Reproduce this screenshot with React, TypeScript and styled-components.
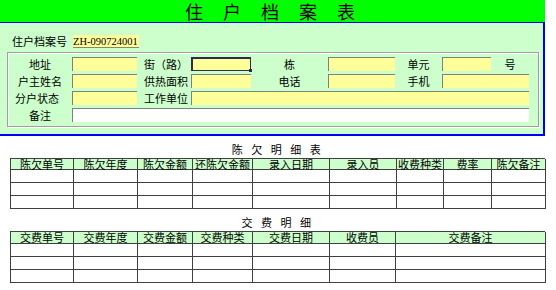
import styled, { createGlobalStyle, css } from "styled-components";

const GlobalStyle = createGlobalStyle`
  body {
    margin: 0;
    background: #fff;
    font-family: "Noto Sans CJK SC", "Noto Sans", sans-serif;
    font-size: 11px;
    color: #000;
  }
`;

interface IColumn {
  title: string;
  width: number;
}

const arrearsColumns: IColumn[] = [
  { title: "陈欠单号", width: 63 },
  { title: "陈欠年度", width: 64 },
  { title: "陈欠金额", width: 55 },
  { title: "还陈欠金额", width: 60 },
  { title: "录入日期", width: 77 },
  { title: "录入员", width: 67 },
  { title: "收费种类", width: 47 },
  { title: "费率", width: 48 },
  { title: "陈欠备注", width: 54 },
];

const paymentColumns: IColumn[] = [
  { title: "交费单号", width: 63 },
  { title: "交费年度", width: 64 },
  { title: "交费金额", width: 55 },
  { title: "交费种类", width: 60 },
  { title: "交费日期", width: 77 },
  { title: "收费员", width: 66 },
  { title: "交费备注", width: 150 },
];

interface IDetailTableProps {
  caption: string;
  columns: IColumn[];
  headHeight: number;
  rows?: number;
}

const DetailTable = ({ caption, columns, headHeight, rows = 3 }: IDetailTableProps) => {
  return (
    <Section>
      <Caption>{caption}</Caption>
      <Grid $cols={columns.map((c) => c.width)}>
        {columns.map((c) => (
          <HeadCell key={c.title} $height={headHeight}>
            {c.title}
          </HeadCell>
        ))}
        {Array.from({ length: rows }).map((_, r) =>
          columns.map((c) => <Cell key={`${r}-${c.title}`} />)
        )}
      </Grid>
    </Section>
  );
};

const App = () => {
  return (
    <>
      <GlobalStyle />
      <Page>
        <TitleBar>住户档案表</TitleBar>
        <Panel>
          <RecordRow>
            <RecordLabel>住户档案号</RecordLabel>
            <RecordValue>ZH-090724001</RecordValue>
          </RecordRow>
          <GroupBox>
            <Label>地址</Label>
            <Field />
            <Label $align="left">街（路）</Label>
            <Field $focused />
            <Label>栋</Label>
            <Field />
            <Label>单元</Label>
            <Field />
            <Label>号</Label>

            <Label>户主姓名</Label>
            <Field />
            <Label $align="left">供热面积</Label>
            <Field />
            <Label>电话</Label>
            <Field />
            <Label>手机</Label>
            <Field $span={2} />

            <Label $align="left">分户状态</Label>
            <Field />
            <Label $align="left">工作单位</Label>
            <Field $span={6} />

            <Label>备注</Label>
            <Field $span={8} $white />
          </GroupBox>
        </Panel>
        <DetailTable caption="陈欠明细表" columns={arrearsColumns} headHeight={11} />
        <DetailTable caption="交费明细" columns={paymentColumns} headHeight={12} />
      </Page>
    </>
  );
};

export default App;

const Page = styled.div`
  width: 545px;
`;

const TitleBar = styled.div`
  height: 22px;
  background: #00ff00;
  display: flex;
  align-items: center;
  justify-content: center;
  padding-left: 15px;
  box-sizing: border-box;
  font-size: 18px;
  line-height: 22px;
  letter-spacing: 20px;
`;

const Panel = styled.div`
  background: #ccffcc;
  border-top: 1px solid #0000ff;
  border-right: 2px solid #0000ff;
  border-bottom: 2px solid #0000ff;
  padding: 10px 0 7px 7px;
  display: flex;
  flex-direction: column;
  gap: 4px;
`;

const RecordRow = styled.div`
  height: 15px;
  display: flex;
  align-items: center;
  padding-left: 5px;
`;

const RecordLabel = styled.span`
  width: 61px;
  line-height: 14px;
`;

const RecordValue = styled.span`
  height: 12px;
  margin-top: 2px;
  padding-right: 1px;
  background: #ffff99;
  border-bottom: 1px solid #8a8a60;
  font-family: "Liberation Serif", serif;
  font-size: 10.5px;
  line-height: 13px;
  white-space: nowrap;
`;

const GroupBox = styled.div`
  width: 532px;
  box-sizing: border-box;
  border: 1px solid #a0a0a0;
  box-shadow: inset 1px 1px 0 #fff, 1px 1px 0 #fff;
  padding: 4px 9px 4px 0;
  display: grid;
  grid-template-columns: 64px 65px 54px 60px 77px 67px 47px 49px 38px;
  grid-auto-rows: 14px;
  row-gap: 3px;
`;

const Label = styled.div<{ $align?: "left" | "center" }>`
  line-height: 14px;
  white-space: nowrap;
  ${({ $align }) =>
    $align === "left"
      ? css`
          text-align: left;
          padding-left: 7px;
        `
      : css`
          text-align: center;
        `}
`;

const Field = styled.div<{ $span?: number; $white?: boolean; $focused?: boolean }>`
  position: relative;
  box-sizing: border-box;
  grid-column: span ${({ $span }) => $span ?? 1};
  background: ${({ $white }) => ($white ? "#ffffff" : "#ffff99")};
  border-top: 1px solid #808080;
  border-left: 1px solid #808080;

  ${({ $focused }) =>
    $focused &&
    css`
      border: 1px solid #2e2b4e;
      box-shadow: inset 1px 1px 0 #2e2b4e;

      &::after {
        content: "";
        position: absolute;
        right: -2px;
        bottom: -2px;
        width: 3px;
        height: 3px;
        background: #2e2b4e;
      }
    `}
`;

const Section = styled.div`
  margin-left: 10px;
  width: 535px;
`;

const Caption = styled.div`
  height: 22px;
  display: flex;
  align-items: flex-end;
  justify-content: center;
  padding-left: 6px;
  box-sizing: border-box;
  line-height: 16px;
  padding-bottom: 1px;
  letter-spacing: 8.5px;
`;

const Grid = styled.div<{ $cols: number[] }>`
  display: grid;
  grid-template-columns: ${({ $cols }) => $cols.map((w) => `${w}px`).join(" ")};
  border-top: 1px solid #404040;
  border-left: 1px solid #404040;
`;

const Cell = styled.div`
  box-sizing: border-box;
  height: 13px;
  border-right: 1px solid #404040;
  border-bottom: 1px solid #404040;
`;

const HeadCell = styled(Cell)<{ $height: number }>`
  height: ${({ $height }) => $height}px;
  background: #ccffcc;
  text-align: center;
  line-height: ${({ $height }) => $height - 1}px;
  white-space: nowrap;
`;
